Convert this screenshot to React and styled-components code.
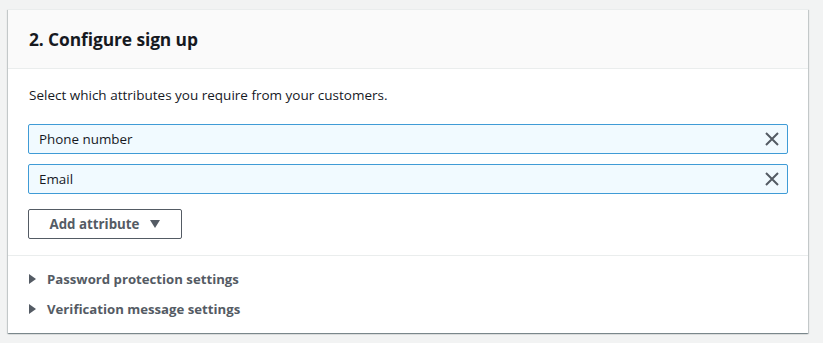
import React from "react";
import styled, { createGlobalStyle } from "styled-components";

const GlobalStyle = createGlobalStyle`
  body {
    margin: 0;
    background: #f2f3f3;
    font-family: "Open Sans", "Liberation Sans", sans-serif;
    color: #16191f;
  }
`;

const Page = styled.div`
  padding: 9px 15px 9px 8px;
`;

const Card = styled.section`
  width: 800px;
  background: #fff;
  border-top: 1px solid #eaeded;
  box-shadow: 0 1px 1px 0 rgba(0, 28, 36, 0.3), 1px 1px 1px 0 rgba(0, 28, 36, 0.15),
    -1px 1px 1px 0 rgba(0, 28, 36, 0.15);
`;

const Header = styled.header`
  height: 58px;
  background: #fafafa;
  border-bottom: 1px solid #eaeded;
  display: flex;
  align-items: center;
  padding: 0 21px;
`;

const Title = styled.h2`
  margin: 0;
  font-size: 17.4px;
  font-weight: 700;
  letter-spacing: -0.1px;
`;

const Body = styled.div`
  padding: 16px 20px 16px 20px;
  border-bottom: 1px solid #eaeded;
`;

const Description = styled.p`
  margin: 0 0 19px 1px;
  font-size: 13.5px;
  line-height: 20px;
`;

const AttrList = styled.div`
  display: flex;
  flex-direction: column;
  gap: 10px;
`;

const AttrRow = styled.div`
  height: 30px;
  box-sizing: border-box;
  border: 1px solid #3f9bd6;
  border-radius: 2px;
  background: #f1faff;
  display: flex;
  align-items: center;
  justify-content: space-between;
  padding: 0 7px 0 10px;
  font-size: 13.4px;
`;

const RemoveButton = styled.button`
  border: 0;
  background: none;
  padding: 0;
  display: flex;
  color: #545b64;
`;

const AddButton = styled.button`
  margin-top: 15px;
  width: 154px;
  height: 30px;
  box-sizing: border-box;
  border: 1px solid #545b64;
  border-radius: 2px;
  background: #fff;
  color: #545b64;
  font-family: inherit;
  font-size: 13.3px;
  font-weight: 700;
  display: flex;
  align-items: center;
  justify-content: center;
  gap: 11px;
`;

const Sections = styled.div`
  padding: 13px 20px 14px;
  display: flex;
  flex-direction: column;
  gap: 10px;
`;

const Expander = styled.div`
  display: flex;
  align-items: center;
  gap: 11px;
  height: 20px;
  padding-left: 1px;
  font-size: 13.2px;
  font-weight: 700;
  color: #545b64;
`;

const Close = () => (
  <svg width="16" height="16" viewBox="0 0 16 16">
    <path d="M2 2l12 12M14 2L2 14" stroke="currentColor" strokeWidth="2" fill="none" />
  </svg>
);

const Down = () => (
  <svg width="10" height="8" viewBox="0 0 10 8">
    <path d="M0 0h10L5 8z" fill="currentColor" />
  </svg>
);

const Right = () => (
  <svg width="7" height="10" viewBox="0 0 7 10">
    <path d="M0 0l7 5-7 5z" fill="currentColor" />
  </svg>
);

const attributes = ["Phone number", "Email"];
const sections = ["Password protection settings", "Verification message settings"];

export default function App() {
  return (
    <>
      <GlobalStyle />
      <Page>
        <Card>
          <Header>
            <Title>2. Configure sign up</Title>
          </Header>
          <Body>
            <Description>Select which attributes you require from your customers.</Description>
            <AttrList>
              {attributes.map((a) => (
                <AttrRow key={a}>
                  <span>{a}</span>
                  <RemoveButton aria-label={`Remove ${a}`}>
                    <Close />
                  </RemoveButton>
                </AttrRow>
              ))}
            </AttrList>
            <AddButton>
              Add attribute <Down />
            </AddButton>
          </Body>
          <Sections>
            {sections.map((s) => (
              <Expander key={s}>
                <Right />
                {s}
              </Expander>
            ))}
          </Sections>
        </Card>
      </Page>
    </>
  );
}
